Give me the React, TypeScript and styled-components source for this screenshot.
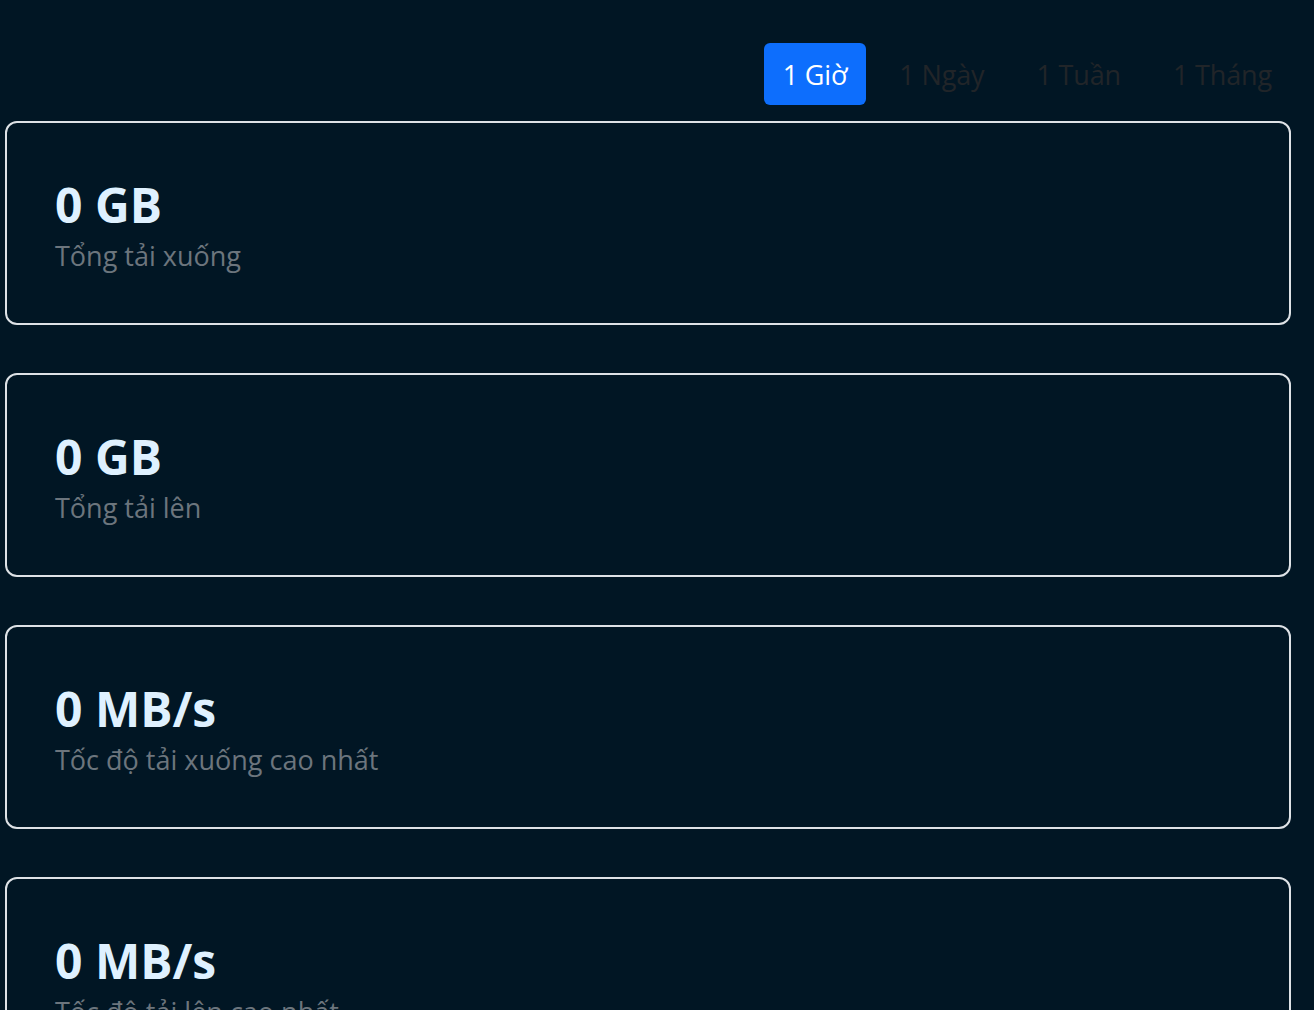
import React, { useState } from "react";
import styled, { createGlobalStyle } from "styled-components";

const Global = createGlobalStyle`
  html, body { margin: 0; padding: 0; background: #011624; }
  body { font-family: "Open Sans", "Noto Sans", "Liberation Sans", sans-serif; }
  * { box-sizing: border-box; }
`;

const Page = styled.div`
  width: 1296px;
  padding: 43px 0 0 5px;
  display: flex;
  flex-direction: column;
  gap: 16px;
`;

const TabBar = styled.div`
  display: flex;
  justify-content: flex-end;
  gap: 14px;
  padding-right: 5px;
`;

const Tab = styled.button<{ $active?: boolean }>`
  height: 62px;
  padding: 0 19px;
  border: none;
  border-radius: 6px;
  font-family: inherit;
  font-size: 27px;
  letter-spacing: -0.15px;
  cursor: pointer;
  background: ${(p) => (p.$active ? "#0d6efd" : "transparent")};
  color: ${(p) => (p.$active ? "#ffffff" : "#212529")};
`;

const List = styled.div`
  display: flex;
  flex-direction: column;
  gap: 48px;
`;

const Card = styled.div`
  width: 1286px;
  height: 204px;
  border: 2px solid #dee2e6;
  border-radius: 12px;
  padding: 52px 48px 0;
  display: flex;
  flex-direction: column;
`;

const Value = styled.div`
  font-size: 48px;
  font-weight: 700;
  line-height: 60px;
  color: #dff1ff;
`;

const Label = styled.div`
  margin-top: 3px;
  font-size: 27px;
  line-height: 36px;
  color: #6c757d;
`;

const tabs = ["1 Giờ", "1 Ngày", "1 Tuần", "1 Tháng"];
const stats = [
  { value: "0 GB", label: "Tổng tải xuống" },
  { value: "0 GB", label: "Tổng tải lên" },
  { value: "0 MB/s", label: "Tốc độ tải xuống cao nhất" },
  { value: "0 MB/s", label: "Tốc độ tải lên cao nhất" },
];

export default function App() {
  const [active, setActive] = useState(0);
  return (
    <>
      <Global />
      <Page>
        <TabBar>
          {tabs.map((t, i) => (
            <Tab key={t} $active={i === active} onClick={() => setActive(i)}>
              {t}
            </Tab>
          ))}
        </TabBar>
        <List>
          {stats.map((s, i) => (
            <Card key={i}>
              <Value>{s.value}</Value>
              <Label>{s.label}</Label>
            </Card>
          ))}
        </List>
      </Page>
    </>
  );
}
